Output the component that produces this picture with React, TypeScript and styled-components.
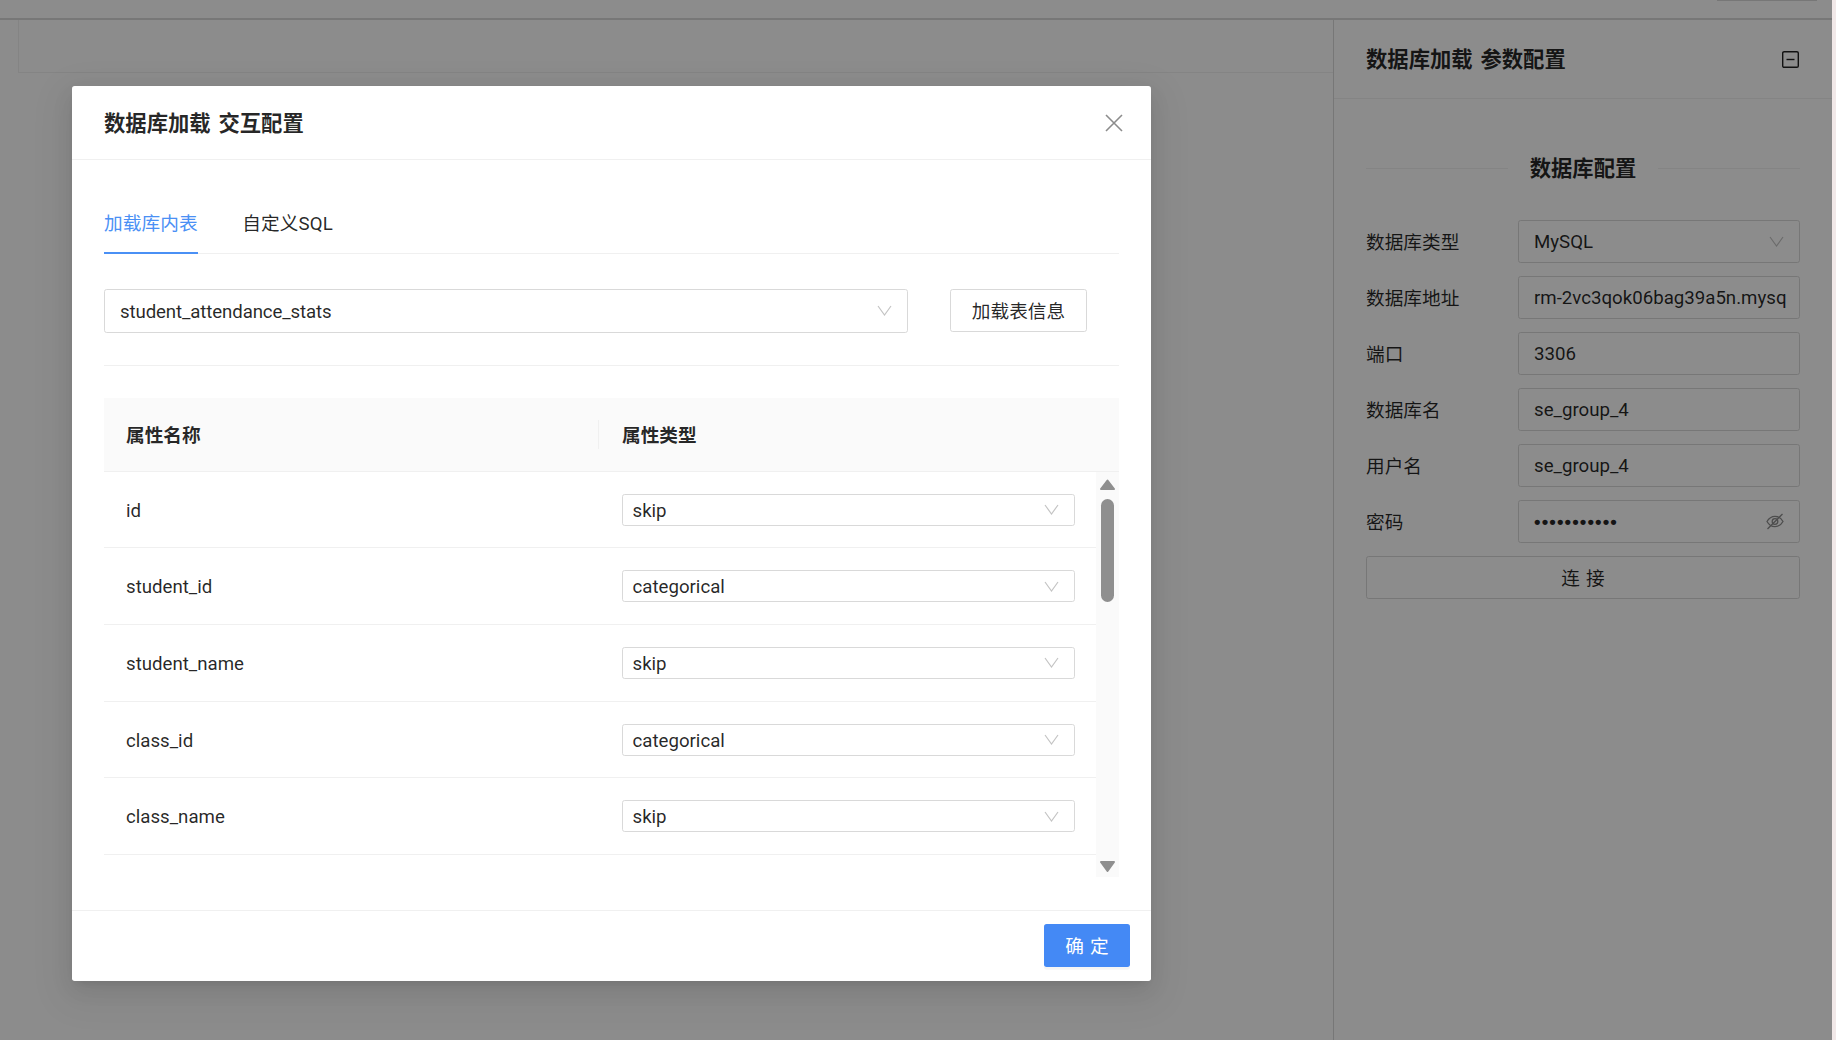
import styled, { createGlobalStyle } from 'styled-components';

const GlobalStyle = createGlobalStyle`
  html, body {
    margin: 0;
    padding: 0;
    height: 100%;
    overflow: hidden;
  }
  body {
    font-family: Roboto, "Noto Sans CJK SC", sans-serif;
    font-size: 18.67px;
    color: rgba(0, 0, 0, 0.85);
    background: #fff;
  }
  * {
    box-sizing: border-box;
  }
`;

const Page = styled.div`
  position: relative;
  width: 1836px;
  height: 1040px;
  overflow: hidden;
  display: flex;
  flex-direction: column;
  background: #f1e8e8;
`;

const TopBar = styled.div`
  height: 20px;
  width: 1832px;
  flex: none;
  display: flex;
  justify-content: flex-end;
  padding-right: 15px;
  background: #fff;
  border-bottom: 2px solid #d9d9d9;
`;

const TopTab = styled.div`
  width: 100px;
  height: 1px;
  background: #d9d9d9;
`;

const Main = styled.div`
  flex: 1;
  width: 1832px;
  display: flex;
  min-height: 0;
  background: #fff;
`;

const Canvas = styled.div`
  flex: 1;
  padding-left: 18px;
`;

const CanvasBar = styled.div`
  height: 53px;
  border-left: 1px solid #f0f0f0;
  border-bottom: 1px solid #f0f0f0;
`;

const Panel = styled.aside`
  width: 499px;
  flex: none;
  border-left: 1.33px solid #d9d9d9;
`;

const PanelHeader = styled.div`
  height: 79px;
  padding: 0 33px 0 32px;
  display: flex;
  align-items: center;
  justify-content: space-between;
  border-bottom: 1px solid #f0f0f0;
`;

const Title = styled.div`
  font-size: 21.33px;
  font-weight: 600;
  word-spacing: 2.5px;
  padding-bottom: 3px;
`;

const PanelBody = styled.div`
  padding: 0 32px;
  display: flex;
  flex-direction: column;
`;

const DividerRow = styled.div`
  display: flex;
  align-items: center;
  gap: 22px;
  height: 42px;
  margin: 48px 0 31px;
`;

const DividerLine = styled.span`
  flex: 1;
  height: 1px;
  background: #f0f0f0;
`;

const DividerText = styled.span`
  font-size: 21.33px;
  font-weight: 600;
  padding-bottom: 3px;
`;

const FormRow = styled.div`
  display: flex;
  align-items: center;
  height: 42.67px;
  margin-bottom: 13.33px;
`;

const FormLabel = styled.label`
  width: 152px;
  flex: none;
  padding-bottom: 2px;
`;

const Field = styled.div`
  flex: 1;
  min-width: 0;
  height: 100%;
  display: flex;
  align-items: center;
  justify-content: space-between;
  gap: 8px;
  padding: 0 15px;
  border: 1.33px solid #d9d9d9;
  border-radius: 2.67px;
  white-space: nowrap;
`;

const FieldValue = styled.span`
  flex: 1;
  padding-top: 2px;
`;

const Dots = styled.span`
  font-size: 18.67px;
  letter-spacing: 1.1px;
  flex: 1;
  padding-top: 2px;
  font-family: "Liberation Sans", sans-serif;
  font-weight: 700;
`;

const GhostButton = styled.button`
  font: inherit;
  color: inherit;
  background: #fff;
  border: 1.33px solid #d9d9d9;
  border-radius: 2.67px;
  height: 42.67px;
  width: 137px;
  flex: none;
  padding: 0 0 2px;
  cursor: pointer;
`;

const WideButton = styled(GhostButton)`
  width: 100%;
  word-spacing: 1.5px;
`;

const Overlay = styled.div`
  position: absolute;
  inset: 0 4px 0 0;
  background: rgba(0, 0, 0, 0.45);
`;

const Modal = styled.div`
  position: absolute;
  left: 72px;
  top: 86px;
  width: 1079px;
  height: 895px;
  background: #fff;
  border-radius: 2.67px;
  box-shadow: 0 8px 21px rgba(0, 0, 0, 0.08), 0 4px 8px -5px rgba(0, 0, 0, 0.12),
    0 12px 37px 11px rgba(0, 0, 0, 0.05);
  display: flex;
  flex-direction: column;
`;

const ModalHeader = styled.div`
  height: 74px;
  flex: none;
  padding: 0 32px;
  display: flex;
  align-items: center;
  justify-content: space-between;
  border-bottom: 1px solid #f0f0f0;
`;

const CloseBtn = styled.span`
  display: flex;
  margin-right: -3.5px;
`;

const ModalBody = styled.div`
  flex: 1;
  min-height: 0;
  padding: 0 32px;
`;

const Tabs = styled.div`
  display: flex;
  gap: 44.5px;
  height: 94px;
  margin-bottom: 35px;
  border-bottom: 1.33px solid #f0f0f0;
`;

const Tab = styled.div<{ $active?: boolean }>`
  display: flex;
  align-items: center;
  padding-top: 31px;
  margin-bottom: -1.33px;
  letter-spacing: 0.1px;
  color: ${p => (p.$active ? '#4a90f5' : 'rgba(0, 0, 0, 0.85)')};
  border-bottom: 2.67px solid ${p => (p.$active ? '#4a90f5' : 'transparent')};
`;

const LoadRow = styled.div`
  display: flex;
  align-items: center;
  gap: 42px;
  padding-right: 32px;
  height: 43.5px;
`;

const TableSelect = styled(Field)`
  flex: 1;
  height: 43.5px;
  letter-spacing: -0.12px;
`;

const Rule = styled.div`
  height: 1.33px;
  background: #f0f0f0;
  margin: 32px 0;
`;

const Table = styled.div`
  display: flex;
  flex-direction: column;
`;

const HeadRow = styled.div`
  display: grid;
  grid-template-columns: 495px 1fr;
  align-items: center;
  height: 74px;
  background: #fafafa;
  border-bottom: 1.33px solid #f0f0f0;
  font-weight: 600;
`;

const HeadCell = styled.div<{ $sep?: boolean }>`
  padding-left: ${p => (p.$sep ? '22px' : '23px')};
  height: 29px;
  line-height: 32px;
  border-right: ${p => (p.$sep ? '1.33px solid #f0f0f0' : '0')};
`;

const ScrollWrap = styled.div`
  display: flex;
  height: 405px;
`;

const Rows = styled.div`
  flex: 1;
  min-width: 0;
`;

const Row = styled.div`
  display: grid;
  grid-template-columns: 495px 1fr;
  align-items: center;
  height: 76.67px;
  border-bottom: 1.33px solid #f0f0f0;
`;

const NameCell = styled.div`
  padding: 2px 0 0 22px;
`;

const TypeCell = styled.div`
  padding: 0 21px 0 23px;
`;

const RowSelect = styled(Field)`
  height: 32px;
  padding: 0 15px 0 9.5px;
`;

const ScrollBar = styled.div`
  width: 23px;
  flex: none;
  background: #fafafa;
  display: flex;
  flex-direction: column;
  align-items: center;
  justify-content: space-between;
  padding: 7px 0 5px;
  position: relative;
`;

const Thumb = styled.div`
  position: absolute;
  top: 27px;
  left: 5px;
  width: 13px;
  height: 103px;
  border-radius: 6.5px;
  background: #8f8f8f;
`;

const ModalFooter = styled.div`
  height: 71px;
  flex: none;
  border-top: 1.33px solid #f0f0f0;
  padding: 13px 21px 0 0;
  display: flex;
  justify-content: flex-end;
  align-items: flex-start;
`;

const PrimaryButton = styled.button`
  font: inherit;
  width: 86px;
  height: 43px;
  padding: 0 0 2px;
  color: #fff;
  background: #4489f5;
  border: 0;
  border-radius: 2.67px;
  word-spacing: 1.5px;
  box-shadow: 0 2.67px 0 rgba(0, 0, 0, 0.04);
  cursor: pointer;
`;

const Chevron = () => (
  <svg width="15" height="11" viewBox="0 0 15 11" fill="none" style={{ flex: 'none' }}>
    <path d="M1 1l6.5 9L14 1" stroke="#c4c4c4" strokeWidth="1.2" />
  </svg>
);

const Arrow = ({ up }: { up?: boolean }) => (
  <svg width="15" height="11" viewBox="0 0 15 11">
    <path
      d={up ? 'M7.5 1.5L14 10H1z' : 'M1 1h13L7.5 10z'}
      fill="#8f8f8f"
      stroke="#8f8f8f"
      strokeWidth="2"
      strokeLinejoin="round"
    />
  </svg>
);

const MinusSquare = () => (
  <svg width="17" height="17" viewBox="0 0 17 17" fill="none">
    <rect x="0.7" y="0.7" width="15.6" height="15.6" rx="1.4" stroke="#222" strokeWidth="1.4" />
    <path d="M4.5 8.5h8" stroke="#222" strokeWidth="1.4" />
  </svg>
);

const EyeOff = () => (
  <svg width="18" height="17" viewBox="0 0 18 17" fill="none" style={{ flex: 'none' }}>
    <path d="M1 8.5C3 5 5.7 3.3 9 3.3s6 1.7 8 5.2c-2 3.5-4.7 5.2-8 5.2S3 12 1 8.5z" stroke="#8c8c8c" strokeWidth="1.3" />
    <circle cx="9" cy="8.5" r="2.8" stroke="#8c8c8c" strokeWidth="1.3" />
    <path d="M16.5 1L1.5 16" stroke="#8c8c8c" strokeWidth="1.3" />
  </svg>
);

const CloseIcon = () => (
  <svg width="18" height="18" viewBox="0 0 18 18" fill="none">
    <path d="M1 1l16 16M17 1L1 17" stroke="#8c8c8c" strokeWidth="1.6" />
  </svg>
);

const columns = [
  { name: 'id', type: 'skip' },
  { name: 'student_id', type: 'categorical' },
  { name: 'student_name', type: 'skip' },
  { name: 'class_id', type: 'categorical' },
  { name: 'class_name', type: 'skip' },
];

const fields = [
  { label: '数据库地址', value: 'rm-2vc3qok06bag39a5n.mysq' },
  { label: '端口', value: '3306' },
  { label: '数据库名', value: 'se_group_4' },
  { label: '用户名', value: 'se_group_4' },
];

function App() {
  return (
    <Page>
      <GlobalStyle />
      <TopBar>
        <TopTab />
      </TopBar>
      <Main>
        <Canvas>
          <CanvasBar />
        </Canvas>
        <Panel>
          <PanelHeader>
            <Title>数据库加载 参数配置</Title>
            <MinusSquare />
          </PanelHeader>
          <PanelBody>
            <DividerRow>
              <DividerLine />
              <DividerText>数据库配置</DividerText>
              <DividerLine />
            </DividerRow>
            <FormRow>
              <FormLabel>数据库类型</FormLabel>
              <Field>
                <FieldValue>MySQL</FieldValue>
                <Chevron />
              </Field>
            </FormRow>
            {fields.map(f => (
              <FormRow key={f.label}>
                <FormLabel>{f.label}</FormLabel>
                <Field>
                  <FieldValue>{f.value}</FieldValue>
                </Field>
              </FormRow>
            ))}
            <FormRow>
              <FormLabel>密码</FormLabel>
              <Field>
                <Dots>•••••••••••</Dots>
                <EyeOff />
              </Field>
            </FormRow>
            <WideButton>连 接</WideButton>
          </PanelBody>
        </Panel>
      </Main>
      <Overlay />
      <Modal>
        <ModalHeader>
          <Title>数据库加载 交互配置</Title>
          <CloseBtn>
            <CloseIcon />
          </CloseBtn>
        </ModalHeader>
        <ModalBody>
          <Tabs>
            <Tab $active>加载库内表</Tab>
            <Tab>自定义SQL</Tab>
          </Tabs>
          <LoadRow>
            <TableSelect>
              <FieldValue>student_attendance_stats</FieldValue>
              <Chevron />
            </TableSelect>
            <GhostButton>加载表信息</GhostButton>
          </LoadRow>
          <Rule />
          <Table>
            <HeadRow>
              <HeadCell $sep>属性名称</HeadCell>
              <HeadCell>属性类型</HeadCell>
            </HeadRow>
            <ScrollWrap>
              <Rows>
                {columns.map(c => (
                  <Row key={c.name}>
                    <NameCell>{c.name}</NameCell>
                    <TypeCell>
                      <RowSelect>
                        <FieldValue>{c.type}</FieldValue>
                        <Chevron />
                      </RowSelect>
                    </TypeCell>
                  </Row>
                ))}
              </Rows>
              <ScrollBar>
                <Arrow up />
                <Thumb />
                <Arrow />
              </ScrollBar>
            </ScrollWrap>
          </Table>
        </ModalBody>
        <ModalFooter>
          <PrimaryButton>确 定</PrimaryButton>
        </ModalFooter>
      </Modal>
    </Page>
  );
}

export default App;
